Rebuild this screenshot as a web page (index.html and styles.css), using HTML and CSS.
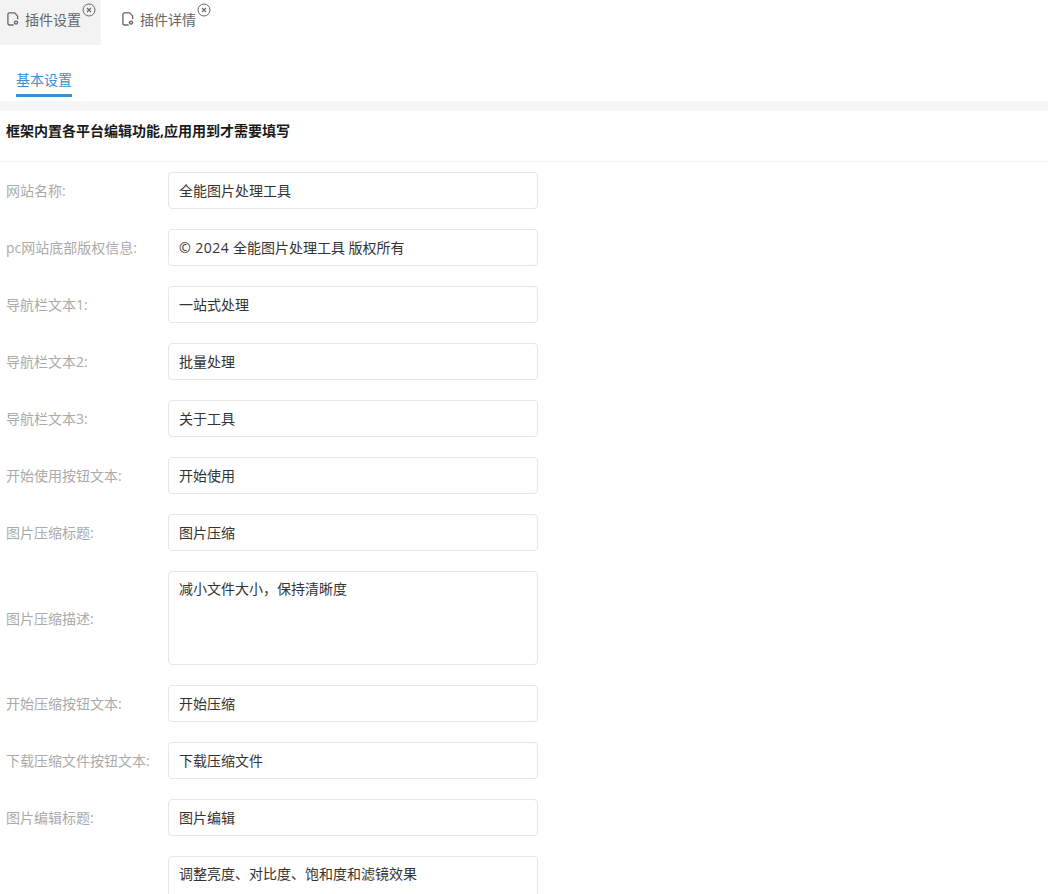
FILE: index.html
```html
<!DOCTYPE html>
<html lang="zh-CN">
<head>
<meta charset="utf-8">
<title>插件设置</title>
<link rel="stylesheet" href="styles.css">
</head>
<body>
<div class="tabs">
  <div class="tab tab-active">
    <svg class="file-icon" viewBox="0 0 12 14"><path d="M6.6 13H2.4a1.5 1.5 0 0 1-1.5-1.5V2.4A1.5 1.5 0 0 1 2.4.9h5.2l3 3v3.4" fill="none" stroke="#666" stroke-width="1.3"/><circle cx="9" cy="10.6" r="2.2" fill="#666"/><circle cx="9" cy="10.6" r=".8" fill="#fff"/></svg>
    <span class="tab-label">插件设置</span>
    <svg class="close-icon" viewBox="0 0 14 14"><circle cx="7" cy="7" r="6" fill="none" stroke="#666" stroke-width="1"/><path d="M5 5l4 4M9 5l-4 4" stroke="#666" stroke-width="1.1"/></svg>
  </div>
  <div class="tab">
    <svg class="file-icon" viewBox="0 0 12 14"><path d="M6.6 13H2.4a1.5 1.5 0 0 1-1.5-1.5V2.4A1.5 1.5 0 0 1 2.4.9h5.2l3 3v3.4" fill="none" stroke="#666" stroke-width="1.3"/><circle cx="9" cy="10.6" r="2.2" fill="#666"/><circle cx="9" cy="10.6" r=".8" fill="#fff"/></svg>
    <span class="tab-label">插件详情</span>
    <svg class="close-icon" viewBox="0 0 14 14"><circle cx="7" cy="7" r="6" fill="none" stroke="#666" stroke-width="1"/><path d="M5 5l4 4M9 5l-4 4" stroke="#666" stroke-width="1.1"/></svg>
  </div>
</div>
<div class="subnav"><span class="subnav-item">基本设置</span></div>
<div class="band"></div>
<div class="heading">框架内置各平台编辑功能,应用用到才需要填写</div>
<form class="form">
  <div class="row"><label class="label">网站名称:</label><div class="field">全能图片处理工具</div></div>
  <div class="row"><label class="label">pc网站底部版权信息:</label><div class="field"><span class="latin">© 2024</span> 全能图片处理工具 版权所有</div></div>
  <div class="row"><label class="label">导航栏文本1:</label><div class="field">一站式处理</div></div>
  <div class="row"><label class="label">导航栏文本2:</label><div class="field">批量处理</div></div>
  <div class="row"><label class="label">导航栏文本3:</label><div class="field">关于工具</div></div>
  <div class="row"><label class="label">开始使用按钮文本:</label><div class="field">开始使用</div></div>
  <div class="row"><label class="label">图片压缩标题:</label><div class="field">图片压缩</div></div>
  <div class="row"><label class="label label-area">图片压缩描述:</label><div class="field field-area">减小文件大小，保持清晰度</div></div>
  <div class="row"><label class="label">开始压缩按钮文本:</label><div class="field">开始压缩</div></div>
  <div class="row"><label class="label">下载压缩文件按钮文本:</label><div class="field">下载压缩文件</div></div>
  <div class="row"><label class="label">图片编辑标题:</label><div class="field">图片编辑</div></div>
  <div class="row"><label class="label label-area">图片编辑描述:</label><div class="field field-area">调整亮度、对比度、饱和度和滤镜效果</div></div>
</form>
</body>
</html>
```
FILE: styles.css
```css
* { box-sizing: border-box; }
html, body { margin: 0; height: 894px; overflow: hidden; background: #fff; }
body { font-family: "Open Sans", "Noto Sans CJK SC", sans-serif; font-size: 14px; color: #333; }
.tabs { display: flex; height: 45px; }
.tab { position: relative; display: flex; align-items: center; height: 45px; width: 101px; padding: 0 0 8px 7px; color: #666; }
.tab + .tab { width: 120px; padding-left: 21px; }
.tab-active { background: #f3f3f3; }
.file-icon { width: 12px; height: 14px; margin-right: 6px; flex: none; }
.tab-label { white-space: nowrap; }
.close-icon { position: absolute; top: 3px; right: 5px; width: 14px; height: 14px; }
.tab + .tab .close-icon { right: 10px; }
.subnav { height: 56px; padding: 16px 0 0 16px; }
.subnav-item { display: inline-block; height: 36px; line-height: 37px; border-bottom: 3px solid #3a8fd6; color: #3a8fd6; }
.band { height: 10px; background: #f5f5f5; }
.heading { height: 51px; padding: 0 6px; line-height: 40px; font-weight: 700; color: #1a1a1a; border-bottom: 1px solid #f2f2f2; }
.form { padding-top: 10px; }
.row { display: flex; align-items: center; margin-bottom: 20px; }
.label { width: 168px; padding-left: 6px; color: #aaa; line-height: 18px; white-space: nowrap; flex: none; }
.label-area { padding-top: 2px; }
.field { width: 370px; height: 37px; line-height: 35px; padding: 0 10px; border: 1px solid #e6e6e6; border-radius: 4px; color: #333; background: #fff; flex: none; }
.latin { letter-spacing: .5px; }
.field-area { height: 94px; line-height: 20px; padding-top: 7px; }
```
